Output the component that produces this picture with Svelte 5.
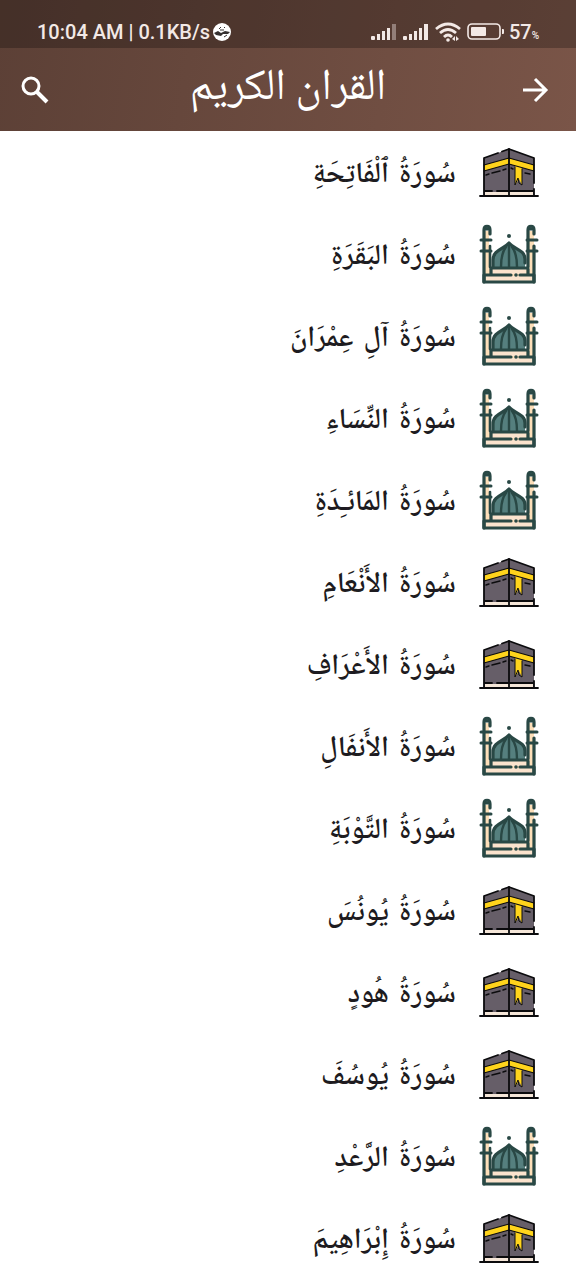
<script>
  const surahs = [
    { name: 'سُورَةُ ٱلْفَاتِحَةِ', place: 'makkah' },
    { name: 'سُورَةُ البَقَرَةِ', place: 'madinah' },
    { name: 'سُورَةُ آلِ عِمْرَانَ', place: 'madinah' },
    { name: 'سُورَةُ النِّسَاءِ', place: 'madinah' },
    { name: 'سُورَةُ المَائـِدَةِ', place: 'madinah' },
    { name: 'سُورَةُ الأَنْعَامِ', place: 'makkah' },
    { name: 'سُورَةُ الأَعْرَافِ', place: 'makkah' },
    { name: 'سُورَةُ الأَنفَالِ', place: 'madinah' },
    { name: 'سُورَةُ التَّوْبَةِ', place: 'madinah' },
    { name: 'سُورَةُ يُونُسَ', place: 'makkah' },
    { name: 'سُورَةُ هُودٍ', place: 'makkah' },
    { name: 'سُورَةُ يُوسُفَ', place: 'makkah' },
    { name: 'سُورَةُ الرَّعْدِ', place: 'madinah' },
    { name: 'سُورَةُ إِبْرَاهِيمَ', place: 'makkah' },
  ];
</script>

{#snippet signal(weak)}
  <svg width="26" height="18" viewBox="0 0 26 18" fill="#f3e9e6">
    <rect x="0" y="13" width="4" height="4" rx="1" />
    <rect x="6" y="11" width="3" height="6" />
    <rect x="11" y="8" width="3" height="9" />
    <rect x="16" y="5" width="3" height="12" />
    <rect x="21" y="1" width="4" height="16" opacity={weak ? 0.4 : 1} />
  </svg>
{/snippet}

{#snippet kaaba()}
  <svg class="place" viewBox="0 0 58 58" stroke-linejoin="round" stroke-linecap="round">
    <path d="M4 14 29 5 54 14V52H4Z" fill="#665e68" />
    <path d="M5 48H53V52H5Z" fill="#f5e6d8" />
    <path d="M4 21 29 14 54 21V27L29 20 4 27Z" fill="#ffd41c" />
    <path d="M35 21 42 23V41L39 35 35 41Z" fill="#ffd41c" />
    <g fill="none" stroke="#0b0b0d" stroke-width="1.800">
      <path d="M4 52V14L18 9M22 7.500 29 5 54 14V39M54 45V52" />
      <path d="M4 21 29 14 54 21M4 27 29 20 54 27" stroke-width="1.200" />
      <path d="M29 5V52" />
      <path d="M35 23V41L38 34 39 39 42 41V25" stroke-width="1" />
      <path d="M6 31 9 30M12 29 20 27M23 26 26 25M31 24 33 25M45 29 50 30" stroke-width="1.400" />
      <path d="M5 47H12M17 47H53" />
      <path d="M0 52H58" />
    </g>
  </svg>
{/snippet}

{#snippet mosque()}
  <svg class="place" viewBox="0 0 58 58" stroke-linejoin="round" stroke-linecap="round">
    <path d="M4 5H9V43H49V5H54V56H4Z" fill="#fddfb9" />
    <path d="M10 5H48V41H10Z" fill="#fff" />
    <path d="M12 43H46V48H12ZM5 50H53V55H5Z" fill="#fbe3cd" />
    <path d="M13 41V33C13 24 24 23 29 17 34 23 45 24 45 33V41Z" fill="#557f7e" />
    <g fill="none" stroke="#294845" stroke-width="3.200">
      <path d="M4 56V4C4-1 10-1 10 4V8M54 56V20M48 41V4C48-1 54-1 54 4V8" />
      <path d="M10 20V41" stroke-width="2.600" />
      <path d="M6 3H8M50 3H52" stroke-width="3" />
      <path d="M1 14H11M1 25H11M47 14H57M47 25H57" stroke-width="3" />
      <path d="M13 41V34C13 24 24 23 29 17 34 23 45 24 45 33V37" />
      <path d="M29 19V41M26 21C22 26 21 33 21 41M32 21C36 26 37 33 37 41" stroke-width="2.400" />
      <path d="M11 42H47M4 49H31M40 49H54M4 49V56H54V49" />
      <path d="M11 43V48M48 43V48" />
    </g>
    <circle cx="29" cy="10" r="2" fill="#294845" />
    <circle cx="36" cy="49" r="1.800" fill="#294845" />
  </svg>
{/snippet}

<div class="screen">
  <header>
    <div class="status">
      <span class="clock">10:04 AM | 0.1KB/s</span>
      <svg width="20" height="20" viewBox="0 0 20 20">
        <circle cx="10" cy="10" r="9" fill="#fff" />
        <path d="M2 11 6 9 9 11 13 9 18 10 16 12 11 12 9 14 4 13Z" fill="#35302f" />
        <path d="M7 7 9 5M12 5 13 6M8 8 12 8M12 15 15 13" fill="none" stroke="#35302f" />
      </svg>
      <span class="spacer"></span>
      {@render signal(true)}
      <span class="gap"></span>
      {@render signal(false)}
      <span class="gap"></span>
      <svg width="26" height="20" viewBox="0 0 26 20" fill="none" stroke="#f3e9e6" stroke-width="2.800">
        <path d="M1 7Q13-3 25 7M5 11Q13 4 21 11M9 15Q13 11 17 15" />
        <circle cx="13" cy="18" r="1.800" fill="#f3e9e6" stroke="none" />
        <path d="M17 17 20 14V19ZM21 14 24 17 21 19Z" fill="#f3e9e6" stroke="none" />
      </svg>
      <span class="gap"></span>
      <svg width="38" height="18" viewBox="0 0 38 18">
        <rect x="1" y="1" width="32" height="15" rx="4" fill="none" stroke="#f3e9e6" stroke-width="1.600" />
        <rect x="4" y="4" width="15" height="9" rx="1" fill="#f3e9e6" />
        <path d="M35 6H36Q37 6 37 7V10Q37 11 36 11H35Z" fill="#f3e9e6" />
      </svg>
      <span class="battery">57<small>%</small></span>
    </div>
    <div class="bar">
      <button type="button" aria-label="بحث">
        <svg width="28" height="28" viewBox="0 0 28 28" fill="none" stroke="#fff" stroke-width="3">
          <circle cx="10" cy="10" r="8" />
          <path d="M16 16 26 26" stroke-width="4" />
        </svg>
      </button>
      <h1 dir="rtl">القران الكريم</h1>
      <button type="button" aria-label="رجوع">
        <svg width="28" height="28" viewBox="0 0 28 28" fill="none" stroke="#fff" stroke-width="3">
          <path d="M2 14H24M14 3 25 14 14 25" />
        </svg>
      </button>
    </div>
  </header>

  <ul dir="rtl">
    {#each surahs as surah}
      <li>
        {#if surah.place === 'makkah'}
          {@render kaaba()}
        {:else}
          {@render mosque()}
        {/if}
        <span class="name">{surah.name}</span>
      </li>
    {/each}
  </ul>
</div>

<style>
  :global(body) {
    margin: 0;
    background: #fff;
  }
  .screen {
    font-family: Roboto, sans-serif;
  }
  header {
    background: linear-gradient(100deg, #5c4036, #7a5548);
    color: #fff;
  }
  .status {
    display: flex;
    align-items: center;
    box-sizing: border-box;
    height: 48px;
    padding: 16px 37px 0;
    background: rgba(0, 0, 0, 0.25);
    color: #f3e9e6;
    font-size: 20px;
    font-weight: 500;
    line-height: 24px;
  }
  .clock {
    margin-right: 2px;
  }
  .spacer {
    flex: 1;
  }
  .gap {
    width: 6px;
  }
  .battery {
    margin-left: 4px;
  }
  .battery small {
    font-size: 10px;
    line-height: 10px;
  }
  .bar {
    display: flex;
    align-items: center;
    justify-content: space-between;
    height: 83px;
    padding: 0 27px 0 21px;
  }
  button {
    display: flex;
    padding: 0;
    border: none;
    background: none;
    cursor: pointer;
  }
  button svg {
    display: block;
  }
  h1 {
    margin: 0;
    padding-left: 6px;
    font-family: 'Noto Naskh Arabic', 'DejaVu Sans', sans-serif;
    font-size: 44px;
    font-weight: 400;
    line-height: 64px;
  }
  ul {
    list-style: none;
    margin: 0;
    padding: 1px 0 0;
  }
  li {
    display: flex;
    align-items: center;
    gap: 24px;
    height: 82px;
    padding: 0 38px;
    color: #1d1b20;
    font-family: 'DejaVu Serif', 'Noto Naskh Arabic', serif;
    font-size: 29px;
    font-weight: 600;
    line-height: 40px;
  }
  .name {
    padding-bottom: 2px;
  }
  .place {
    width: 58px;
    height: 58px;
    flex: none;
    overflow: visible;
  }
</style>
